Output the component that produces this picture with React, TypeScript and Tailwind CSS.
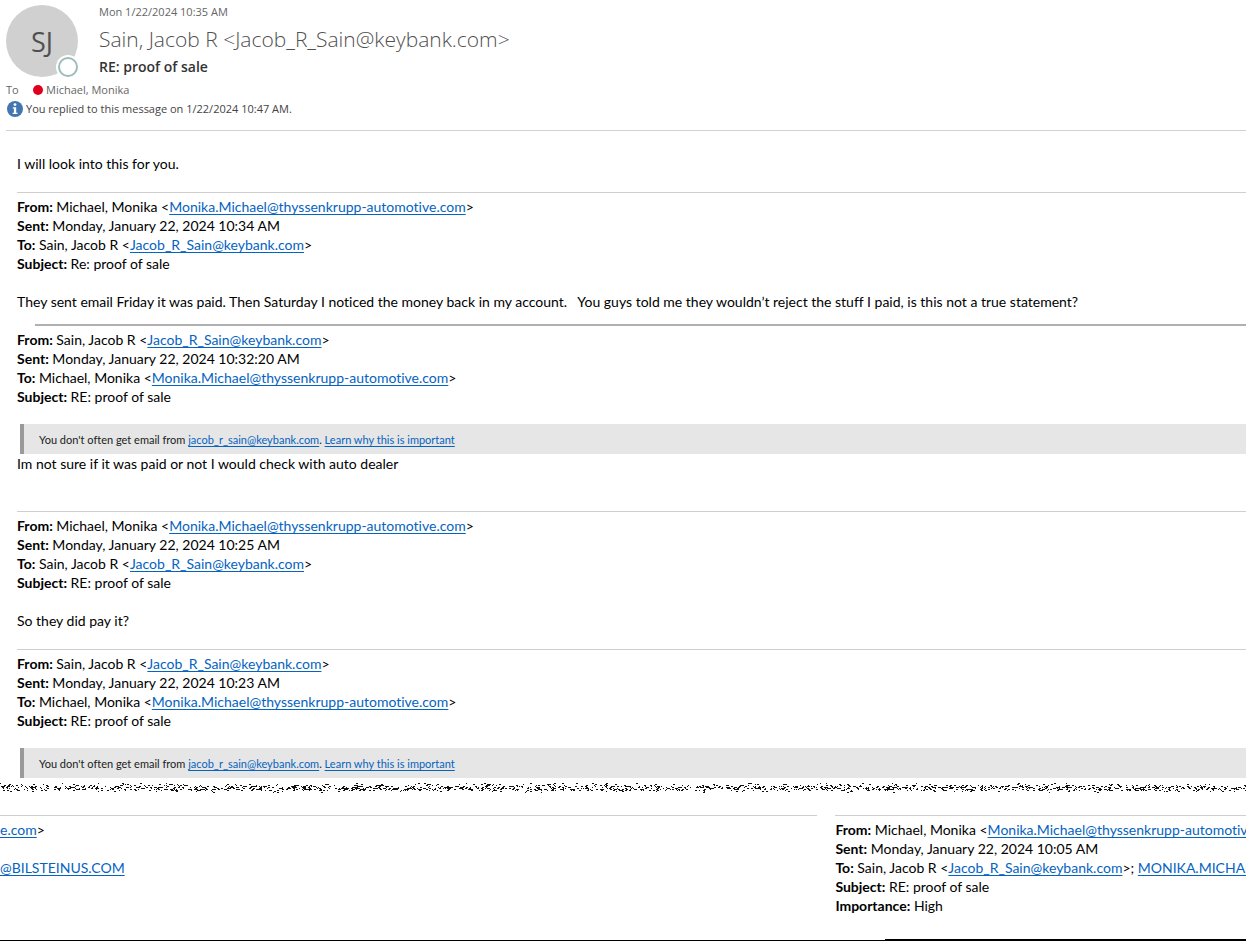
import type { ReactNode } from 'react';

const MONIKA = 'Monika.Michael@thyssenkrupp-automotive.com';
const JACOB = 'Jacob_R_Sain@keybank.com';

interface Person {
  name: string;
  email: string;
}

const monika: Person = { name: 'Michael, Monika', email: MONIKA };
const jacob: Person = { name: 'Sain, Jacob R', email: JACOB };

interface MailLinkProps {
  email: string;
  children?: ReactNode;
}

function MailLink({ email, children }: MailLinkProps) {
  return (
    <a
      href={`mailto:${email}`}
      className="text-[#0563c1] underline underline-offset-2 [text-decoration-skip-ink:none]"
    >
      {children ?? email}
    </a>
  );
}

function Field({ label, children }: { label: string; children: ReactNode }) {
  return (
    <p>
      <b className="font-bold">{label}:</b> {children}
    </p>
  );
}

interface QuoteHeaderProps {
  from: Person;
  to: Person;
  sent: string;
  subject: string;
  cc?: string;
  importance?: string;
}

function QuoteHeader({ from, to, sent, subject, cc, importance }: QuoteHeaderProps) {
  return (
    <div className="pt-1">
      <Field label="From">
        {from.name} &lt;<MailLink email={from.email} />&gt;
      </Field>
      <Field label="Sent">{sent}</Field>
      <Field label="To">
        {to.name} &lt;<MailLink email={to.email} />&gt;
        {cc && (
          <>
            ; <MailLink email={cc} />
          </>
        )}
      </Field>
      <Field label="Subject">{subject}</Field>
      {importance && <Field label="Importance">{importance}</Field>}
    </div>
  );
}

function SafetyTip() {
  return (
    <div className="ml-[3px] mt-[18px] flex h-[30px] items-center border-l-4 border-[#9a9a9a] bg-[#e5e6e5] pl-[15px] text-[11px] text-[#212121]">
      <p>
        You don't often get email from <MailLink email="jacob_r_sain@keybank.com" />.{' '}
        <a
          href="#learn"
          className="text-[#0563c1] underline underline-offset-2 [text-decoration-skip-ink:none]"
        >
          Learn why this is important
        </a>
      </p>
    </div>
  );
}

// slanted pen marks for the torn line of text between the two parts of the thread
function tornLine() {
  let seed = 17;
  const rand = () => {
    seed = (seed * 16807) % 2147483647;
    return seed / 2147483647;
  };
  const density = [0.05, 0.1, 0.2, 0.36, 0.42, 0.42, 0.38, 0.26, 0.06, 0.03];
  let d = '';
  for (let x = 0; x < 2600; x += 2) {
    density.forEach((chance, row) => {
      if (rand() < chance) {
        const w = rand() < 0.4 ? 1 : 2;
        d += `M${x + (row % 2)} ${row}h${w}v1h-${w}z`;
      }
    });
  }
  return d;
}

const TORN = tornLine();

export default function App() {
  return (
    <main className="overflow-hidden bg-white font-[Lato,'Liberation_Sans',sans-serif] text-[14px] leading-[19px] text-black [font-variant-ligatures:none]">
      <header className="ml-[6px] border-b border-[#d2d2d2] pb-3 font-['Open_Sans','Noto_Sans',sans-serif] text-[11px] text-[#666]">
        <div className="flex gap-[21px] pt-[5px]">
          <div className="relative flex size-[72px] shrink-0 items-center justify-center rounded-full bg-[#d0d0d0]">
            <span className="text-[27px] text-[#505050]">SJ</span>
            <span className="absolute -bottom-[2px] -right-[2px] size-6 rounded-full bg-white p-[2px]">
              <span className="block size-5 rounded-full border-2 border-[#9dbdb9]" />
            </span>
          </div>
          <div className="min-w-0">
            <p className="leading-[14px]">Mon 1/22/2024 10:35 AM</p>
            <h1 className="text-[21px] font-light leading-[40px] text-[#505050]">
              Sain, Jacob R &lt;Jacob_R_Sain@keybank.com&gt;
            </h1>
            <h2 className="text-[14px] font-semibold leading-[15px] text-[#333]">RE: proof of sale</h2>
          </div>
        </div>
        <div className="mt-[3px] flex items-center">
          <span className="w-[27px]">To</span>
          <span className="mr-[3px] size-[10px] rounded-full bg-[#e0001b]" />
          <span>Michael, Monika</span>
        </div>
        <div className="flex items-center gap-[3px] text-[#444]">
          <svg viewBox="0 0 16 16" className="ml-px size-4" aria-hidden="true">
            <circle cx="8" cy="8" r="8" fill="#4376b0" />
            <circle cx="8" cy="3.6" r="1.4" fill="#fff" />
            <path d="M5.8 6.2h3.4v5.6h1.3v1.3H5.6v-1.3h1.3V7.5H5.8z" fill="#fff" />
          </svg>
          <span>You replied to this message on 1/22/2024 10:47 AM.</span>
        </div>
      </header>

      <article className="ml-4 pl-px">
        <p className="pb-[19px] pt-[23px]">I will look into this for you.</p>

        <hr className="border-[#cfcfcf]" />
        <QuoteHeader from={monika} to={jacob} sent="Monday, January 22, 2024 10:34 AM" subject="Re: proof of sale" />
        <p className="whitespace-pre-wrap pb-[13px] pt-[19px]">
          They sent email Friday it was paid. Then Saturday I noticed the money back in my account.{'   '}You guys told me
          they wouldn’t reject the stuff I paid, is this not a true statement?
        </p>

        <hr className="ml-[18px] border-t-2 border-[#b0b0b0]" />
        <QuoteHeader from={jacob} to={monika} sent="Monday, January 22, 2024 10:32:20 AM" subject="RE: proof of sale" />
        <SafetyTip />
        <p className="pb-[38px]">Im not sure if it was paid or not I would check with auto dealer</p>

        <hr className="border-[#cfcfcf]" />
        <QuoteHeader from={monika} to={jacob} sent="Monday, January 22, 2024 10:25 AM" subject="RE: proof of sale" />
        <p className="py-[19px]">So they did pay it?</p>

        <hr className="border-[#cfcfcf]" />
        <QuoteHeader from={jacob} to={monika} sent="Monday, January 22, 2024 10:23 AM" subject="RE: proof of sale" />
        <SafetyTip />
      </article>

      <div className="mt-[5px] h-[10px] overflow-hidden">
        <svg width="2600" height="10" className="max-w-none" aria-hidden="true" shapeRendering="crispEdges">
          <path d={TORN} fill="#111" />
        </svg>
      </div>

      <section className="mt-[22px] grid grid-cols-[65.6%_1fr] gap-[18px] whitespace-nowrap">
        <div className="min-w-0">
          <hr className="border-[#cfcfcf]" />
          <p className="pt-1">
            <MailLink email={MONIKA}>e.com</MailLink>&gt;
          </p>
          <p className="pt-[19px]">
            <MailLink email="MONIKA.MICHAEL@BILSTEINUS.COM">@BILSTEINUS.COM</MailLink>
          </p>
        </div>
        <div className="min-w-0">
          <hr className="border-[#cfcfcf]" />
          <QuoteHeader
            from={monika}
            to={jacob}
            cc="MONIKA.MICHAEL@BILSTEINUS.COM"
            sent="Monday, January 22, 2024 10:05 AM"
            subject="RE: proof of sale"
            importance="High"
          />
        </div>
      </section>

      <footer className="mt-6 border-b border-black">
        <div className="ml-[71%] h-px bg-black" />
      </footer>
    </main>
  );
}
